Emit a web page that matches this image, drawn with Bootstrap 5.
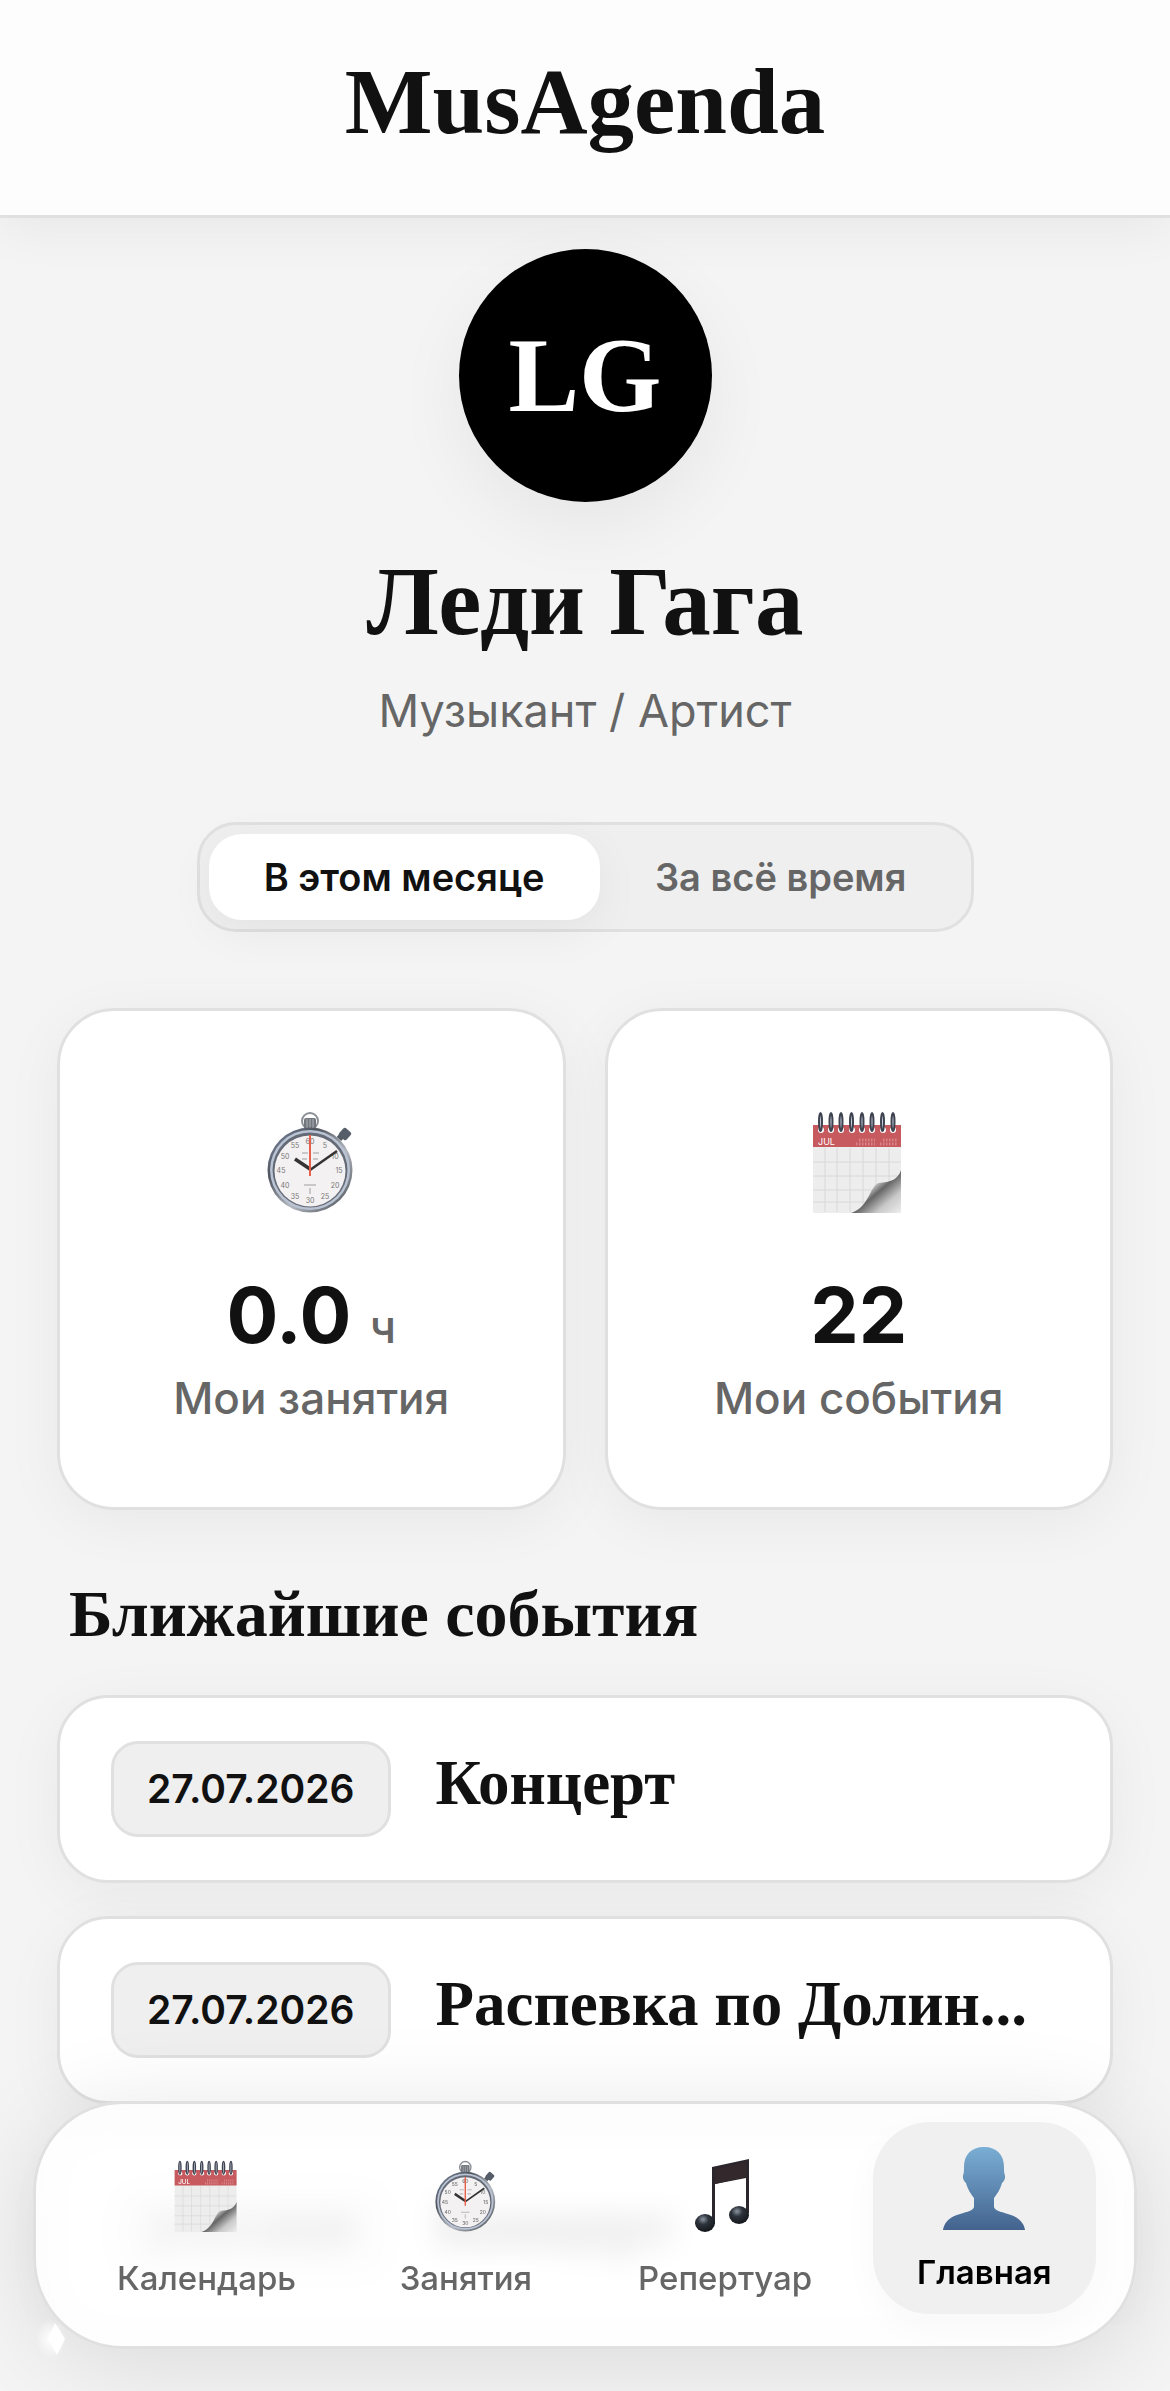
<!DOCTYPE html>
<html lang="ru">
<head>
<meta charset="utf-8">
<meta name="viewport" content="width=device-width, initial-scale=1">
<title>MusAgenda</title>
<link href="https://cdn.jsdelivr.net/npm/bootstrap@5.3.0/dist/css/bootstrap.min.css" rel="stylesheet">
<style>
  :root { --ink:#111; --soft:#666; --line:#e0e0e0; --fill:#efefef; --serif:"Liberation Serif",Georgia,serif; }
  body { background:#f4f4f4; color:var(--ink); font-family:Inter,"Noto Sans",sans-serif; }
  .topbar { background:#fdfdfd; border-bottom:3px solid var(--line); box-shadow:0 12px 48px rgba(0,0,0,.05); padding:48px 57px 59px; }
  .brand { font:700 93px/108px var(--serif); color:var(--ink); }
  .page { padding:31px 57px 0; }
  .avatar { width:253px; height:253px; font:700 106px/120px var(--serif); background:#000; color:#fff; box-shadow:0 24px 72px rgba(0,0,0,.06); }
  .person { font:700 97px/108px var(--serif); margin:46px 0 0; }
  .role { font-size:45px; line-height:60px; color:var(--soft); margin:25px 0 0; }
  .segment { margin-top:81px; padding:9px; width:777px; max-width:100%; border:3px solid var(--line); border-radius:39px; background:var(--fill); }
  .segment button { border:0; border-radius:33px; background:none; color:var(--soft); font-weight:600; font-size:38px; line-height:42px; padding:22px 42px; }
  .segment button.on { background:#fff; color:var(--ink); box-shadow:0 12px 48px rgba(0,0,0,.05); }
  .stats { margin-top:76px; gap:39px; }
  .panel { background:#fff; border:3px solid var(--line); border-radius:57px; box-shadow:0 12px 60px rgba(0,0,0,.05); }
  .stat { flex:1 1 0; padding:97px 24px 82px; }
  .stat svg { height:108px; width:108px; display:block; margin:0 auto; }
  .num { font-size:77px; line-height:90px; font-weight:700; margin-top:54px; }
  .num span { font-size:45px; line-height:45px; font-weight:500; color:var(--soft); }
  .cap { font-size:44px; line-height:54px; font-weight:500; color:var(--soft); margin-top:11px; }
  .section-title { font:700 66px/72px var(--serif); margin:68px 0 45px 12px; }
  .events { gap:33px; }
  .event { padding:43px 51px; gap:45px; border-radius:51px; }
  .date { background:var(--fill); border:3px solid var(--line); border-radius:27px; font-weight:600; font-size:39px; line-height:48px; padding:21px 33px; }
  .what { font:700 63px/72px var(--serif); padding-bottom:12px; }
  .dock { left:33px; right:33px; bottom:42px; border:3px solid var(--line); border-radius:90px; background:rgba(255,255,255,.86); backdrop-filter:blur(15px); box-shadow:0 12px 96px rgba(0,0,0,.11); padding:18px 38px 32px 59px; gap:36px; }
  .dock a { flex:1 1 0; text-decoration:none; color:var(--soft); font-weight:500; font-size:33px; line-height:42px; border-radius:57px; padding-top:36px; }
  .dock a svg { width:76px; height:76px; margin-bottom:23px; }
  .dock a.on { background:#f0f0f0; color:#000; font-weight:600; padding:24px 0 21px; box-shadow:0 12px 36px rgba(0,0,60,.03); }
  .dock a.on svg { width:84px; height:84px; margin-bottom:21px; }
  .spark { left:0; bottom:-15px; width:36px; height:44px; }
</style>
</head>
<body>
<svg width="0" height="0" class="position-absolute" aria-hidden="true">
  <defs>
    <linearGradient id="steel" x1="0" y1="0" x2="1" y2="1"><stop offset="0" stop-color="#8495b0"/><stop offset=".3" stop-color="#4d525b"/><stop offset=".6" stop-color="#b5bac2"/><stop offset="1" stop-color="#3c4148"/></linearGradient>
    <linearGradient id="man" x1="0" y1="0" x2="0" y2="1"><stop offset="0" stop-color="#7aaed4"/><stop offset="1" stop-color="#43638e"/></linearGradient>
    <linearGradient id="curl" x1="0" y1="0" x2="1" y2="1"><stop offset="0" stop-color="#fff"/><stop offset=".35" stop-color="#f2f2f2"/><stop offset=".53" stop-color="#666"/><stop offset=".75" stop-color="#c9c9c9"/><stop offset="1" stop-color="#eee"/></linearGradient>
    <radialGradient id="ball" cx=".4" cy=".3" r=".7"><stop offset="0" stop-color="#8b95a0"/><stop offset=".4" stop-color="#2d333b"/><stop offset="1" stop-color="#14171b"/></radialGradient>
    <radialGradient id="glow"><stop offset="0" stop-color="#fff"/><stop offset="1" stop-color="#fff" stop-opacity="0"/></radialGradient>
    <symbol id="watch" viewBox="1 0 108 108">
      <circle cx="54" cy="13" r="8" fill="none" stroke="#8b8f96" stroke-width="2"/>
      <rect x="48" y="10" width="12" height="12" rx="2" fill="#71757c"/><path d="M51 11v9M54 11v9M57 11v9" stroke="#aeb2b8"/>
      <path d="M83 31l6-7" stroke="#555b64" stroke-width="6"/><rect x="84" y="21" width="10" height="10" rx="2" transform="rotate(42 89 26)" fill="#555d68"/>
      <circle cx="54" cy="62" r="42.500" fill="url(#steel)"/><circle cx="54" cy="62" r="40" fill="#b9c3d4"/><circle cx="54" cy="62" r="37.500" fill="#656b76"/>
      <circle cx="54" cy="63" r="35.500" fill="#f3f1f2"/>
      <g font-family="Inter,sans-serif" font-size="7" fill="#777" text-anchor="middle"><text x="54" y="36">60</text><text x="69" y="40">5</text><text x="79" y="51">10</text><text x="83" y="65">15</text><text x="79" y="80">20</text><text x="69" y="91">25</text><text x="54" y="95">30</text><text x="39" y="91">35</text><text x="29" y="80">40</text><text x="25" y="65">45</text><text x="29" y="51">50</text><text x="39" y="40">55</text></g>
      <path d="M46 45h6M57 45h6M46 51h5M57 51h5M48 77h12M54 80v6" stroke="#bbb" stroke-width="1.500"/>
      <path d="M54 61L39 51" stroke="#333" stroke-width="3.500"/><path d="M54 62L81 43" stroke="#333" stroke-width="2.500"/><path d="M54 27v41" stroke="#e8604c" stroke-width="2"/>
    </symbol>
    <symbol id="cal" viewBox="2 0 108 108">
      <path d="M10 18h88v87H10z" fill="#ededed"/>
      <path d="M22 40v64M34 40v64M47 40v64M60 40v64M73 40v64M86 40v64M10 54h88M10 68h88M10 82h88M10 94h88" stroke="#d8d8d8" stroke-width="1"/>
      <path d="M10 17h88v22H10z" fill="#c65a5f"/>
      <path d="M53 36h19M77 36h18M56 32h16M80 32h15" stroke="#d98488" stroke-width="3" stroke-dasharray="1.500 1.500"/>
      <text x="15" y="37" font-family="Inter,sans-serif" font-size="9" fill="#fff">JUL</text>
      <g fill="#fff"><circle cx="18" cy="22" r="3"/><circle cx="28" cy="22" r="3"/><circle cx="38" cy="22" r="3"/><circle cx="49" cy="22" r="3"/><circle cx="59" cy="22" r="3"/><circle cx="69" cy="22" r="3"/><circle cx="80" cy="22" r="3"/><circle cx="90" cy="22" r="3"/></g>
      <g fill="#c9d2df" stroke="#3f4350" stroke-width="2"><ellipse cx="17.500" cy="14" rx="1.500" ry="9"/><ellipse cx="28" cy="14" rx="1.500" ry="9"/><ellipse cx="38" cy="14" rx="1.500" ry="9"/><ellipse cx="48.500" cy="14" rx="1.500" ry="9"/><ellipse cx="59" cy="14" rx="1.500" ry="9"/><ellipse cx="69" cy="14" rx="1.500" ry="9"/><ellipse cx="79.500" cy="14" rx="1.500" ry="9"/><ellipse cx="90" cy="14" rx="1.500" ry="9"/></g>
      <path d="M98 62c-3 10-11 12-22 13-9 2-10 25-28 30h50z" fill="url(#curl)"/>
    </symbol>
    <symbol id="notes" viewBox="2 0 76 76">
      <path d="M27 9L64 1v54h-3V20L30 26v40h-3z" fill="#2a262b"/><path d="M30 11l31-7v15l-31 7z" fill="#33282c"/>
      <ellipse cx="20" cy="65" rx="10" ry="9" fill="url(#ball)"/><ellipse cx="54" cy="57" rx="10" ry="9" fill="url(#ball)"/>
    </symbol>
    <symbol id="user" viewBox="0 0 84 84">
      <path d="M42 1c13 0 20 8 20 20 0 3 0 5 .5 7 1.500 3 0 7-2.500 9-2 7-5 11-8 15v9c2 8 28 4 31 23H1c3-19 29-15 31-23v-9c-3-4-6-8-8-15-2.500-2-4-6-2.500-9 .5-2 .5-4 .5-7C22 9 29 1 42 1z" fill="url(#man)"/>
    </symbol>
  </defs>
</svg>

<header class="topbar d-flex align-items-center justify-content-center">
  <h1 class="brand m-0">MusAgenda</h1>
</header>

<main class="page">
  <section class="d-flex flex-column align-items-center text-center">
    <div class="avatar rounded-circle d-flex align-items-center justify-content-center">LG</div>
    <h2 class="person">Леди Гага</h2>
    <p class="role">Музыкант / Артист</p>
    <div class="segment d-flex" role="group" aria-label="Период">
      <button type="button" class="on flex-fill text-nowrap">В этом месяце</button>
      <button type="button" class="flex-fill text-nowrap">За всё время</button>
    </div>
  </section>

  <section class="stats d-flex text-center">
    <div class="panel stat">
      <svg aria-hidden="true"><use href="#watch"/></svg>
      <div class="num">0.0 <span>ч</span></div>
      <div class="cap">Мои занятия</div>
    </div>
    <div class="panel stat">
      <svg aria-hidden="true"><use href="#cal"/></svg>
      <div class="num">22</div>
      <div class="cap">Мои события</div>
    </div>
  </section>

  <h3 class="section-title">Ближайшие события</h3>
  <div class="events d-flex flex-column">
    <article class="panel event d-flex align-items-center"><time class="date" datetime="2026-07-27">27.07.2026</time><div class="what text-nowrap">Концерт</div></article>
    <article class="panel event d-flex align-items-center"><time class="date" datetime="2026-07-27">27.07.2026</time><div class="what text-nowrap">Распевка по Долин...</div></article>
    <article class="panel event d-flex align-items-center"><time class="date" datetime="2026-07-27">27.07.2026</time><div class="what text-nowrap">Концерт</div></article>
  </div>
</main>

<nav class="dock position-fixed d-flex align-items-start text-center" aria-label="Разделы">
  <svg class="spark position-absolute" viewBox="0 0 36 44" aria-hidden="true"><ellipse cx="15" cy="22" rx="15" ry="20" fill="url(#glow)"/><path d="M19 6l10 16-8 16-9-16z" fill="#fff"/></svg>
  <a href="#calendar" class="d-flex flex-column align-items-center"><svg aria-hidden="true"><use href="#cal"/></svg>Календарь</a>
  <a href="#practice" class="d-flex flex-column align-items-center"><svg aria-hidden="true"><use href="#watch"/></svg>Занятия</a>
  <a href="#repertoire" class="d-flex flex-column align-items-center"><svg aria-hidden="true"><use href="#notes"/></svg>Репертуар</a>
  <a href="#home" class="on d-flex flex-column align-items-center" aria-current="page"><svg aria-hidden="true"><use href="#user"/></svg>Главная</a>
</nav>
<script src="https://cdn.jsdelivr.net/npm/bootstrap@5.3.0/dist/js/bootstrap.bundle.min.js"></script>
</body>
</html>
